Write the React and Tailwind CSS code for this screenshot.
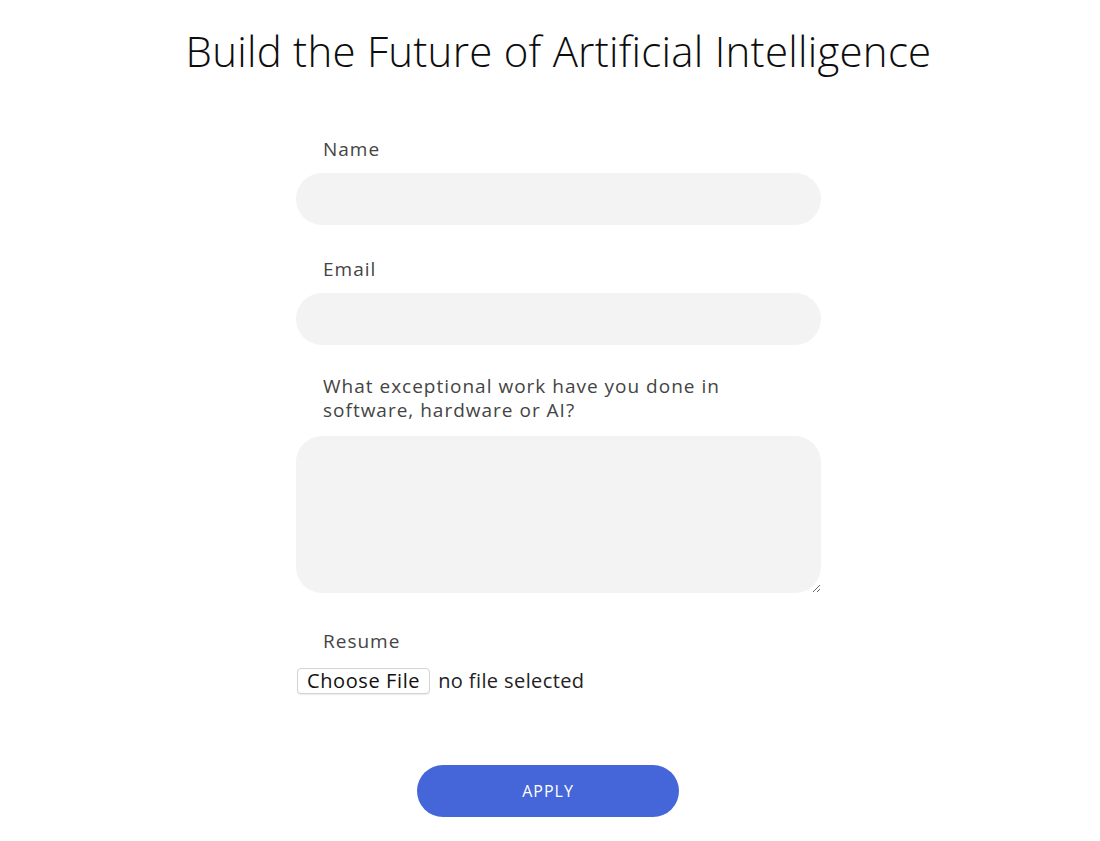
export default function App() {
  return (
    <div className="min-h-[841px] bg-white pl-[17px] font-['Open_Sans',sans-serif]">
      <div className="flex flex-col items-center">
        <h1 className="mt-[26px] text-[42px] leading-[50px] font-light tracking-[0.25px] text-[#0d0d0d]">
          Build the Future of Artificial Intelligence
        </h1>

        <form className="mt-[61px] flex w-[525px] flex-col" onSubmit={(e) => e.preventDefault()}>
          <label className="pl-[27px] text-[19px] leading-[24px] font-medium tracking-[1px] text-[#444]">Name</label>
          <input
            type="text"
            className="mt-[12px] h-[52px] w-full rounded-full bg-[#f3f3f3] px-6 outline-none"
          />

          <label className="mt-[32px] pl-[27px] text-[19px] leading-[24px] font-medium tracking-[1px] text-[#444]">Email</label>
          <input
            type="email"
            className="mt-[12px] h-[52px] w-full rounded-full bg-[#f3f3f3] px-6 outline-none"
          />

          <label className="mt-[29px] pl-[27px] pr-[70px] text-[19px] leading-[24px] font-medium tracking-[1px] text-[#444]">
            What exceptional work have you done in software, hardware or AI?
          </label>
          <textarea className="mt-[14px] h-[157px] w-full resize-y rounded-[26px] bg-[#f3f3f3] px-6 py-4 outline-none" />

          <label className="mt-[36px] pl-[27px] text-[19px] leading-[24px] font-medium tracking-[1px] text-[#444]">Resume</label>
          <div className="mt-[15px] flex items-center gap-[8px]">
            <button
              type="button"
              className="ml-px h-[26px] rounded-[4px] border border-[#d4d4d4] bg-white px-[9px] text-[20px] leading-none tracking-[0.6px] text-[#111] shadow-[0_1px_1px_rgba(0,0,0,0.08)]"
            >
              Choose File
            </button>
            <span className="text-[20px] leading-none tracking-[0.4px] text-[#222]">no file selected</span>
          </div>

          <div className="mt-[71px] flex justify-center pr-[21px]">
            <button
              type="submit"
              className="h-[52px] w-[262px] rounded-full bg-[#4466d8] text-[16px] font-medium tracking-[1px] text-white"
            >
              APPLY
            </button>
          </div>
        </form>
      </div>
    </div>
  );
}
